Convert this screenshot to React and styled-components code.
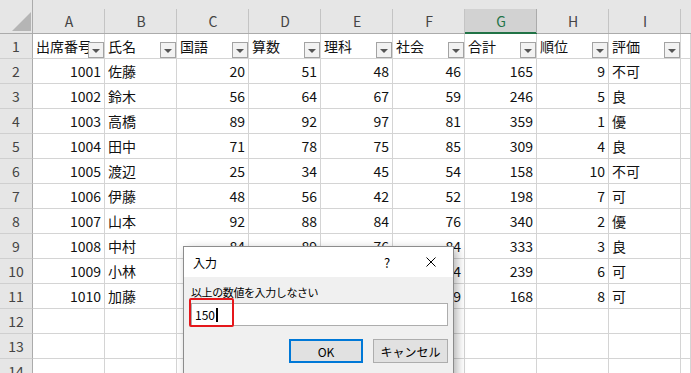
import styled, { createGlobalStyle, css } from 'styled-components';

const GlobalStyle = createGlobalStyle`
  html, body {
    margin: 0;
    padding: 0;
    overflow: hidden;
    background: #fff;
  }
  body {
    font-family: "Noto Sans CJK JP", "Noto Sans", sans-serif;
  }
`;

const Sheet = styled.div`
  position: relative;
  width: 691px;
  height: 373px;
  overflow: hidden;
  background: #fff;
`;

const Grid = styled.div`
  display: grid;
  grid-template-columns: 33px repeat(9, 72px) 1fr;
  grid-template-rows: 34px repeat(14, 25px);
`;

const Corner = styled.div`
  display: flex;
  align-items: flex-end;
  justify-content: flex-end;
  padding: 0 1px 2px 0;
  background: #e6e6e6;
  border-right: 1px solid #ababab;
  border-bottom: 1px solid #ababab;
`;

const ColHead = styled.div`
  position: relative;
  display: flex;
  align-items: center;
  justify-content: center;
  padding-top: 8px;
  background: #e6e6e6;
  border-bottom: 1px solid #ababab;
  color: #444;
  font-size: 14px;
  &::after {
    content: '';
    position: absolute;
    right: 0;
    top: 9px;
    bottom: 0;
    width: 1px;
    background: ${({ $last }) => ($last ? 'transparent' : '#c4c4c4')};
  }
  ${({ $active }) =>
    $active &&
    css`
      background: linear-gradient(to bottom, #e6e6e6 9px, #d2d2d2 9px);
      border-bottom-color: #217346;
      box-shadow: inset 0 -1px 0 #217346;
      color: #217346;
      &::after {
        background: #ababab;
      }
    `}
`;

const RowHead = styled.div`
  display: flex;
  align-items: center;
  justify-content: center;
  background: #e6e6e6;
  border-right: 1px solid #ababab;
  border-bottom: 1px solid #cfcfcf;
  color: #444;
  font-size: 14px;
`;

const Cell = styled.div`
  position: relative;
  display: flex;
  align-items: center;
  justify-content: ${({ $num }) => ($num ? 'flex-end' : 'flex-start')};
  padding: 0 3px;
  border-right: 1px solid #d4d4d4;
  border-bottom: 1px solid #d4d4d4;
  overflow: hidden;
  white-space: nowrap;
  font-size: 14px;
  color: #111;
`;

const FilterBtn = styled.span`
  position: absolute;
  right: 0;
  bottom: 0;
  width: 16px;
  height: 16px;
  box-sizing: border-box;
  border: 1px solid #a3a3a3;
  background: #f2f2f2;
  display: flex;
  align-items: center;
  justify-content: center;
  &::before {
    content: '';
    margin-top: 2px;
    border-left: 4px solid transparent;
    border-right: 4px solid transparent;
    border-top: 4px solid #555;
  }
`;

const Dialog = styled.div`
  position: absolute;
  left: 183px;
  top: 246px;
  width: 271px;
  height: 150px;
  box-sizing: border-box;
  background: #f0f0f0;
  border: 1px solid #8c8c8c;
  box-shadow: 3px 3px 9px rgba(0, 0, 0, 0.3);
  color: #000;
`;

const TitleBar = styled.div`
  display: flex;
  align-items: center;
  height: 30px;
  padding-left: 9px;
  background: #fff;
  font-size: 12px;
`;

const Title = styled.span`
  flex: 1;
`;

const TitleBtn = styled.span`
  width: 44px;
  height: 30px;
  display: flex;
  align-items: center;
  justify-content: center;
  font-size: 13px;
`;

const Body = styled.div`
  display: flex;
  flex-direction: column;
  padding: 8px 5px 0 7px;
`;

const Prompt = styled.div`
  font-size: 11px;
  line-height: 14px;
  letter-spacing: -0.4px;
`;

const InputBox = styled.div`
  position: relative;
  display: flex;
  align-items: center;
  height: 23px;
  box-sizing: border-box;
  margin-top: 4px;
  padding-left: 3px;
  background: #fff;
  border: 1px solid #adadad;
  font-size: 12px;
`;

const Caret = styled.span`
  display: inline-block;
  width: 2px;
  height: 14px;
  margin-left: 1px;
  background: #000;
`;

const Highlight = styled.span`
  position: absolute;
  left: -3px;
  top: -6px;
  width: 45px;
  height: 29px;
  box-sizing: border-box;
  border: 2px solid #e5171b;
  border-radius: 2px;
`;

const Buttons = styled.div`
  display: flex;
  justify-content: flex-end;
  gap: 10px;
  margin-top: 13px;
`;

const Button = styled.button`
  width: ${({ $primary }) => ($primary ? '74px' : '75px')};
  height: 24px;
  box-sizing: border-box;
  padding: 0;
  background: #e1e1e1;
  border: ${({ $primary }) => ($primary ? '2px solid #0078d7' : '1px solid #adadad')};
  font-family: inherit;
  font-size: 12px;
  color: #000;
`;

const columns = ['A', 'B', 'C', 'D', 'E', 'F', 'G', 'H', 'I'];
const headers = ['出席番号', '氏名', '国語', '算数', '理科', '社会', '合計', '順位', '評価'];

const rows = [
  [1001, '佐藤', 20, 51, 48, 46, 165, 9, '不可'],
  [1002, '鈴木', 56, 64, 67, 59, 246, 5, '良'],
  [1003, '高橋', 89, 92, 97, 81, 359, 1, '優'],
  [1004, '田中', 71, 78, 75, 85, 309, 4, '良'],
  [1005, '渡辺', 25, 34, 45, 54, 158, 10, '不可'],
  [1006, '伊藤', 48, 56, 42, 52, 198, 7, '可'],
  [1007, '山本', 92, 88, 84, 76, 340, 2, '優'],
  [1008, '中村', 84, 89, 76, 84, 333, 3, '良'],
  [1009, '小林', 62, 58, 65, 54, 239, 6, '可'],
  [1010, '加藤', 35, 42, 52, 39, 168, 8, '可'],
];

const CloseIcon = () => (
  <svg width="10" height="10" viewBox="0 0 10 10">
    <path d="M0.5 0.5 L9.5 9.5 M9.5 0.5 L0.5 9.5" stroke="#000" strokeWidth="1" />
  </svg>
);

const Row = ({ n, values }) => (
  <>
    <RowHead>{n}</RowHead>
    {values.map((v, i) => (
      <Cell key={i} $num={typeof v === 'number'}>
        {v}
      </Cell>
    ))}
    <Cell />
  </>
);

const App = () => {
  return (
    <>
      <GlobalStyle />
      <Sheet>
        <Grid>
          <Corner>
            <svg width="19" height="19" viewBox="0 0 19 19">
              <polygon points="0,19 19,19 19,0" fill="#b5b5b5" />
            </svg>
          </Corner>
          {columns.map(c => (
            <ColHead key={c} $active={c === 'G'}>
              {c}
            </ColHead>
          ))}
          <ColHead $last />

          <RowHead>1</RowHead>
          {headers.map(h => (
            <Cell key={h}>
              {h}
              <FilterBtn />
            </Cell>
          ))}
          <Cell />

          {rows.map((row, i) => (
            <Row key={row[0]} n={i + 2} values={row} />
          ))}

          {[12, 13, 14].map(n => (
            <Row key={n} n={n} values={Array(9).fill('')} />
          ))}
        </Grid>

        <Dialog>
          <TitleBar>
            <Title>入力</Title>
            <TitleBtn>?</TitleBtn>
            <TitleBtn>
              <CloseIcon />
            </TitleBtn>
          </TitleBar>
          <Body>
            <Prompt>以上の数値を入力しなさい</Prompt>
            <InputBox>
              150
              <Caret />
              <Highlight />
            </InputBox>
            <Buttons>
              <Button $primary>OK</Button>
              <Button>キャンセル</Button>
            </Buttons>
          </Body>
        </Dialog>
      </Sheet>
    </>
  );
};

export default App;
